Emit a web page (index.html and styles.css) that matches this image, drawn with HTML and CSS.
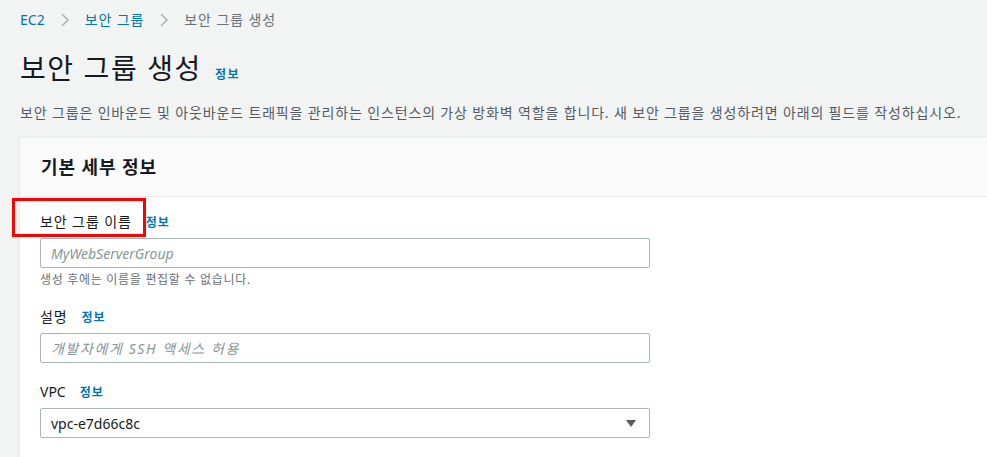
FILE: index.html
```html
<!DOCTYPE html>
<html lang="ko">
<head>
<meta charset="utf-8">
<title>보안 그룹 생성</title>
<link rel="stylesheet" href="styles.css">
</head>
<body>
<div class="page">
  <nav class="crumbs">
    <a class="crumb-link" href="#">EC2</a>
    <svg class="chev" viewBox="0 0 10 16" width="10" height="16"><path d="M2 2l6 6-6 6" fill="none" stroke="#aab7b8" stroke-width="1.6"/></svg>
    <a class="crumb-link ko" href="#">보안 그룹</a>
    <svg class="chev" viewBox="0 0 10 16" width="10" height="16"><path d="M2 2l6 6-6 6" fill="none" stroke="#aab7b8" stroke-width="1.6"/></svg>
    <span class="crumb-current ko">보안 그룹 생성</span>
  </nav>

  <header class="title-row">
    <h1 class="title">보안 그룹 생성</h1>
    <a class="info info-title" href="#">정보</a>
  </header>

  <p class="desc">보안 그룹은 인바운드 및 아웃바운드 트래픽을 관리하는 인스턴스의 가상 방화벽 역할을 합니다. 새 보안 그룹을 생성하려면 아래의 필드를 작성하십시오.</p>

  <section class="card">
    <div class="card-head">
      <h2 class="card-title">기본 세부 정보</h2>
    </div>
    <div class="card-body">
      <div class="field field-name">
        <div class="label-row"><span class="label ko">보안 그룹 이름</span><a class="info" href="#">정보</a></div>
        <div class="input"><span class="placeholder">MyWebServerGroup</span></div>
        <div class="hint">생성 후에는 이름을 편집할 수 없습니다.</div>
        <div class="highlight"></div>
      </div>
      <div class="field">
        <div class="label-row"><span class="label ko">설명</span><a class="info" href="#">정보</a></div>
        <div class="input"><span class="placeholder ko-ph">개발자에게 SSH 액세스 허용</span></div>
      </div>
      <div class="field">
        <div class="label-row"><span class="label">VPC</span><a class="info" href="#">정보</a></div>
        <div class="input select"><span class="value">vpc-e7d66c8c</span><svg class="caret" viewBox="0 0 10 7" width="10" height="7"><path d="M0 0h10L5 7z" fill="#545b64"/></svg></div>
      </div>
    </div>
  </section>
</div>
</body>
</html>
```

FILE: styles.css
```css
* { box-sizing: border-box; }
html, body { margin: 0; padding: 0; }
body {
  background: #f2f3f3;
  font-family: "Noto Sans", "Noto Sans CJK KR", sans-serif;
  color: #16191f;
  overflow: hidden;
  width: 987px;
  height: 457px;
}
.page { padding: 10px 0 0 20px; }
a { text-decoration: none; }
.ko { letter-spacing: 0.9px; }

.crumbs {
  display: flex;
  align-items: center;
  gap: 15px;
  font-size: 14px;
  line-height: 20px;
  height: 20px;
}
.crumb-link { color: #0073bb; }
.crumb-current { color: #687078; }
.chev { display: block; }

.title-row {
  display: flex;
  align-items: baseline;
  gap: 12px;
  margin-top: 18px;
}
.title {
  margin: 0;
  font-size: 28px;
  font-weight: 400;
  line-height: 40px;
  letter-spacing: 1.6px;
}
.info {
  color: #0073bb;
  font-size: 12px;
  font-weight: 700;
  letter-spacing: 1px;
}
.info-title { letter-spacing: 1.5px; margin-left: 1px; }
.desc {
  margin: 15px 0 0;
  font-size: 14px;
  line-height: 20px;
  color: #545b64;
  letter-spacing: 0.85px;
  white-space: nowrap;
}

.card {
  margin: 14px -40px 0 -1px;
  background: #fff;
  border: 1px solid #eaeded;
  box-shadow: 0 1px 1px rgba(0,28,36,0.1);
}
.card-head {
  height: 59px;
  background: #fafafa;
  border-bottom: 1px solid #eaeded;
  display: flex;
  align-items: center;
  padding-left: 21px;
}
.card-title {
  margin: 0;
  font-size: 18px;
  font-weight: 700;
  line-height: 24px;
  letter-spacing: 0.9px;
}
.card-body { padding: 15px 20px 20px 20px; }

.field { position: relative; margin-bottom: 19px; }
.label-row {
  display: flex;
  align-items: baseline;
  gap: 14px;
  height: 20px;
  line-height: 20px;
  margin-bottom: 6px;
}
.label { font-size: 14px; }
.input {
  width: 610px;
  height: 30px;
  border: 1px solid #aab7b8;
  border-radius: 2px;
  background: #fff;
  display: flex;
  align-items: center;
  padding: 0 10px;
  font-size: 14px;
}
.placeholder { color: #879596; font-style: italic; }
.ko-ph { letter-spacing: 1.6px; }
.select { justify-content: space-between; padding-right: 13px; }
.value { color: #16191f; }
.caret { display: block; }
.hint {
  margin-top: 4px;
  font-size: 12px;
  line-height: 16px;
  color: #687078;
  letter-spacing: 0.7px;
}
.highlight {
  position: absolute;
  left: -28px;
  top: -14px;
  width: 134px;
  height: 39px;
  border: 3px solid #ff0000;
  pointer-events: none;
}
```
